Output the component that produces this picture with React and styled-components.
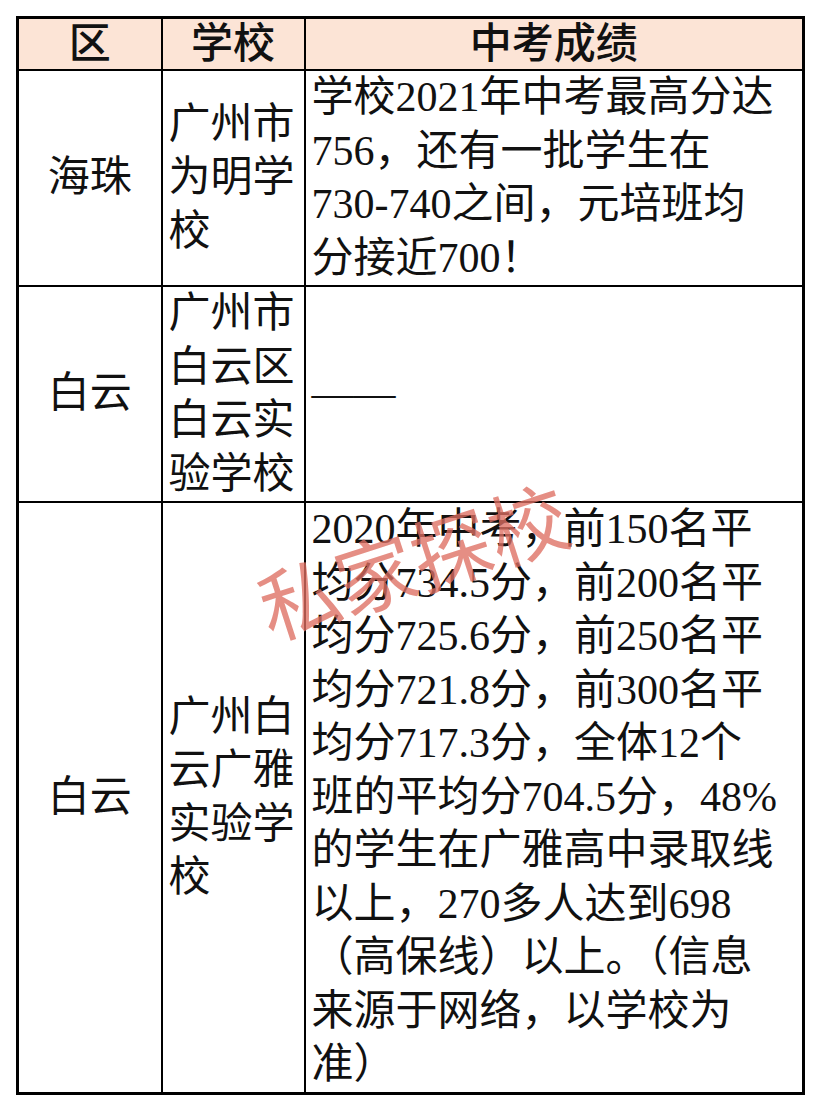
import styled, { createGlobalStyle } from 'styled-components'

const GlobalStyle = createGlobalStyle`
  html, body {
    margin: 0;
    padding: 0;
    background: #fff;
  }
`;

const serif = `'Liberation Serif', 'Noto Sans CJK SC', serif`;

const Page = styled.div`
  width: 820px;
  height: 1112px;
  padding: 16px;
  box-sizing: border-box;
  background: #fff;
  font-family: ${serif};
  color: #111;
`;

const Frame = styled.div`
  position: relative;
  width: 789px;
`;

const Table = styled.table`
  width: 789px;
  border-collapse: collapse;
  table-layout: fixed;
  border: 3px solid #000;
  font-family: ${serif};
`;

const HeadCell = styled.th`
  height: 50px;
  padding: 0;
  background: #fce4d6;
  border: 2px solid #000;
  font-family: ${serif};
  font-size: 42px;
  font-weight: 500;
  line-height: 50px;
  text-align: center;
  vertical-align: middle;
`;

const Cell = styled.td`
  height: ${p => p.$h}px;
  padding: ${p => (p.$center ? '0' : '0 6px 0 6px')};
  border: 2px solid #000;
  font-family: ${serif};
  font-size: 42px;
  line-height: 53.5px;
  text-align: ${p => (p.$center ? 'center' : 'left')};
  vertical-align: middle;
  white-space: nowrap;
`;

const Num = styled.span`
  font-family: 'Liberation Serif', serif;
`;

const Watermark = styled.div`
  position: absolute;
  left: 396px;
  top: 542px;
  font-family: 'Noto Sans CJK SC', sans-serif;
  font-size: 80px;
  font-weight: 400;
  line-height: 1;
  color: rgba(222, 110, 98, 0.78);
  transform: translate(-50%, -50%) rotate(-18deg);
  pointer-events: none;
  white-space: nowrap;
`;

const rows = [
  {
    h: 211,
    area: '海珠',
    school: ['广州市', '为明学', '校'],
    result: ['学校2021年中考最高分达', '756，还有一批学生在', '730-740之间，元培班均', '分接近700！'],
  },
  {
    h: 209,
    area: '白云',
    school: ['广州市', '白云区', '白云实', '验学校'],
    result: ['——'],
  },
  {
    h: 589,
    area: '白云',
    school: ['广州白', '云广雅', '实验学', '校'],
    result: [
      '2020年中考，前150名平',
      '均分734.5分，前200名平',
      '均分725.6分，前250名平',
      '均分721.8分，前300名平',
      '均分717.3分，全体12个',
      '班的平均分704.5分，48%',
      '的学生在广雅高中录取线',
      '以上，270多人达到698',
      '（高保线）以上。（信息',
      '来源于网络，以学校为',
      '准）',
    ],
  },
];

// numbers go in their own span so the latin serif face is used for them
const withNums = text =>
  text.split(/([0-9.%\-—]+)/).map((part, i) =>
    /^[0-9.%\-—]+$/.test(part) ? <Num key={i}>{part}</Num> : part
  );

const lines = list =>
  list.map((l, i) => (
    <span key={i}>
      {withNums(l)}
      {i < list.length - 1 && <br />}
    </span>
  ));

export default function App() {
  return (
    <Page>
      <GlobalStyle />
      <Frame>
        <Table>
          <colgroup>
            <col style={{ width: 144 }} />
            <col style={{ width: 143 }} />
            <col />
          </colgroup>
          <thead>
            <tr>
              <HeadCell>区</HeadCell>
              <HeadCell>学校</HeadCell>
              <HeadCell>中考成绩</HeadCell>
            </tr>
          </thead>
          <tbody>
            {rows.map((row, idx) => (
              <tr key={idx}>
                <Cell $h={row.h} $center>{row.area}</Cell>
                <Cell $h={row.h}>{lines(row.school)}</Cell>
                <Cell $h={row.h}>{lines(row.result)}</Cell>
              </tr>
            ))}
          </tbody>
        </Table>
        <Watermark>私家探校</Watermark>
      </Frame>
    </Page>
  )
}
